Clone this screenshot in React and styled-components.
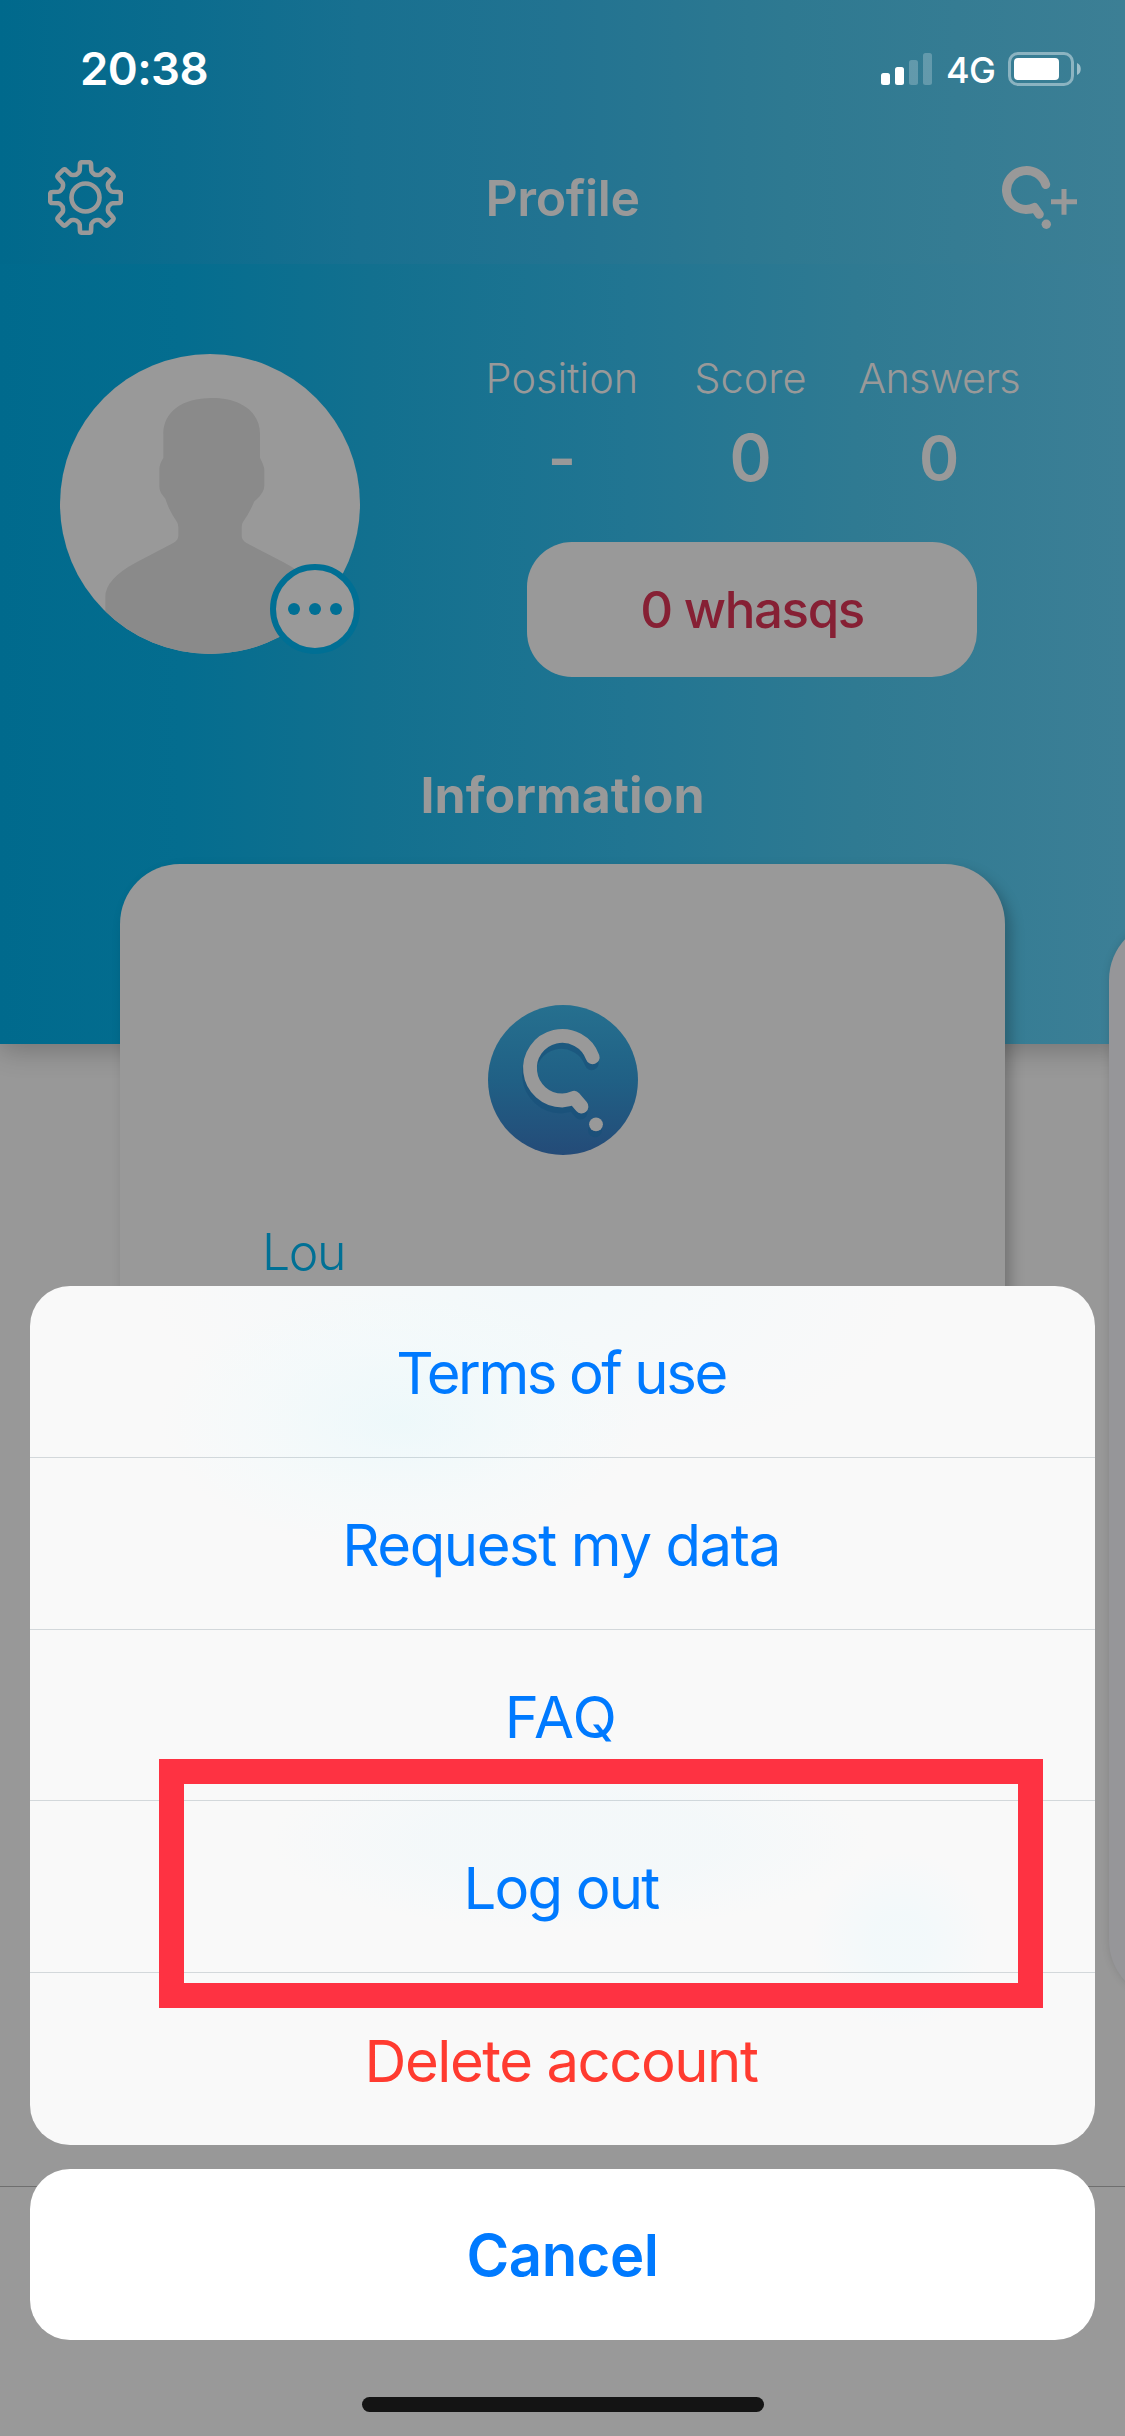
import React from "react";
import styled, { createGlobalStyle } from "styled-components";

const GlobalStyle = createGlobalStyle`
  body { margin: 0; background: #989898; }
  * { box-sizing: border-box; }
  button { font: inherit; border: 0; padding: 0; background: none; }
`;

const Screen = styled.div`
  position: relative;
  display: flex;
  flex-direction: column;
  width: 1125px;
  height: 2436px;
  overflow: hidden;
  background: #989898;
  color: #999;
  font-family: Inter, "Liberation Sans", sans-serif;
  white-space: nowrap;
`;

const Hero = styled.section`
  flex: none;
  height: 1044px;
  background: linear-gradient(90deg, #006a8d 0%, #046d8f 16%, #12708f 33%, #217592 56%, #2f7a92 76%, #3c7f96 100%);
  box-shadow: 0 6px 26px rgba(0, 0, 0, 0.24);
`;

const TopBar = styled.header`
  height: 264px;
  background: linear-gradient(90deg, #00698c 0%, #0b6c8e 16%, #187090 32%, #227391 50%, #2e7991 70%, #3c7f95 100%);
`;

const StatusBar = styled.div`
  display: flex;
  align-items: center;
  justify-content: space-between;
  height: 132px;
  padding: 5px 44px 0 80px;
  color: #fff;
`;

const Clock = styled.span`
  font-size: 45.5px;
  font-weight: 600;
  letter-spacing: -0.6px;
`;

const StatusIcons = styled.div`
  display: flex;
  align-items: center;
  gap: 14px;
`;

const Network = styled.span`
  width: 48px;
  font-size: 36px;
  font-weight: 500;
  letter-spacing: -0.6px;
  padding-top: 2px;
`;

const NavBar = styled.nav`
  display: grid;
  grid-template-columns: 75px 1fr 75px;
  align-items: center;
  height: 131px;
  padding: 0 48px;
`;

const NavTitle = styled.h1`
  margin: 0;
  text-align: center;
  font-size: 50px;
  font-weight: 600;
  letter-spacing: -0.4px;
`;

const Summary = styled.div`
  display: flex;
  height: 413px;
  padding: 90px 87px 0 60px;
`;

const Avatar = styled.div`
  position: relative;
  flex: none;
  width: 300px;
  height: 300px;
`;

const MoreBadge = styled.button`
  position: absolute;
  right: 0;
  bottom: 0;
  display: flex;
  align-items: center;
  justify-content: center;
  gap: 8.6px;
  width: 90px;
  height: 90px;
  border: 6px solid #006f94;
  border-radius: 50%;
  background: #999;
`;

const Dot = styled.i`
  width: 12.4px;
  height: 12.4px;
  border-radius: 50%;
  background: #006f94;
`;

const StatsPanel = styled.div`
  display: flex;
  flex-direction: column;
  align-items: center;
  flex: 1;
  margin-left: 106px;
`;

const Stats = styled.dl`
  display: grid;
  grid-template-columns: repeat(3, 188.6px);
  margin: -1px 3px 0 0;
  height: 189px;
`;

const Stat = styled.div`
  display: flex;
  flex-direction: column;
  align-items: center;
`;

const StatLabel = styled.dt`
  font-size: 41.5px;
  font-weight: 300;
  line-height: 50px;
  letter-spacing: ${(p) => p.$track || 0}px;
`;

const StatValue = styled.dd`
  margin: 15px 0 0;
  font-size: ${(p) => p.$size}px;
  font-weight: 600;
  line-height: 80px;
`;

const WhasqsButton = styled.button`
  width: 450px;
  height: 135px;
  border-radius: 45px;
  background: #999;
  color: #862034;
  font-size: 51px;
  font-weight: 500;
  letter-spacing: -1.4px;
`;

const SectionTitle = styled.h2`
  margin: 86px 0 0;
  text-align: center;
  font-size: 50px;
  line-height: 64px;
  font-weight: 700;
  letter-spacing: 0.05px;
`;

const Carousel = styled.div`
  display: flex;
  align-items: center;
  flex: none;
  gap: 104px;
  margin-top: -180px;
  padding-left: 120px;
  height: 1192px;
`;

const Card = styled.article`
  flex: none;
  display: flex;
  flex-direction: column;
  align-items: center;
  width: 885px;
  height: ${(p) => p.$height}px;
  padding-top: 141px;
  border-radius: 60px;
  background: ${(p) => (p.$dim ? "#969699" : "#999")};
  box-shadow: ${(p) => (p.$dim ? "0 0 8px rgba(0,0,0,.12)" : "6px 7px 14px rgba(0,0,0,.24)")};
`;

const OwnerName = styled.p`
  align-self: flex-start;
  margin: 66px 0 0 142px;
  color: #007095;
  font-size: 50px;
  font-weight: 300;
  line-height: 62px;
  letter-spacing: -1.4px;
`;

const TabBar = styled.footer`
  height: 250px;
  margin-top: auto;
  flex: none;
  border-top: 1.5px solid #6e6e6e;
  background: #999;
`;

const SheetLayer = styled.div`
  position: absolute;
  inset: 0;
  display: flex;
  flex-direction: column;
  justify-content: flex-end;
  gap: 24px;
  padding: 0 30px 24px;
`;

const ActionSheet = styled.div`
  position: relative;
`;

const Actions = styled.ul`
  display: grid;
  grid-template-rows: repeat(5, 171.8px);
  margin: 0;
  padding: 0;
  list-style: none;
  overflow: hidden;
  border-radius: 40px;
  background:
    radial-gradient(ellipse 240px 130px at 370px 135px, rgba(232, 248, 251, 0.65), rgba(240, 250, 252, 0.4) 60%, transparent),
    radial-gradient(ellipse 380px 180px at 500px 0, rgba(240, 249, 251, 0.7), transparent),
    radial-gradient(ellipse 300px 90px at 540px 555px, rgba(242, 248, 250, 0.7) 50%, transparent),
    radial-gradient(ellipse 90px 90px at 870px 655px, rgba(240, 249, 251, 0.7) 30%, transparent),
    #f9f9f9;
`;

const Action = styled.li`
  display: flex;
  align-items: center;
  justify-content: center;
  padding: 3px 3px 0 0;
  border-bottom: 1.5px solid rgba(60, 85, 100, 0.2);
  color: ${(p) => (p.$danger ? "#ff3b30" : "#007aff")};
  font-size: 58px;
  letter-spacing: ${(p) => p.$track || 0}px;
  &:last-child { border-bottom: 0; }
`;

const Highlight = styled.div`
  position: absolute;
  left: 129px;
  top: 473px;
  width: 884px;
  height: 249px;
  border: 25px solid #fe3242;
`;

const CancelButton = styled.button`
  height: 171px;
  border-radius: 40px;
  background: #fff;
  color: #007aff;
  font-size: 58px;
  font-weight: 600;
  letter-spacing: -0.5px;
`;

const HomeIndicator = styled.div`
  align-self: center;
  width: 402px;
  height: 15px;
  margin-top: 33px;
  border-radius: 8px;
  background: #141414;
`;

const SignalIcon = () => (
  <svg width="51" height="32" viewBox="0 0 51 32" fill="#fff">
    <rect x="0" y="20" width="9" height="12" rx="2.5" />
    <rect x="14" y="14" width="9" height="18" rx="2.5" />
    <rect x="28" y="7" width="9" height="25" rx="2.5" opacity=".23" />
    <rect x="42" y="0" width="9" height="32" rx="2.5" opacity=".23" />
  </svg>
);

const BatteryIcon = () => (
  <svg width="73" height="34" viewBox="0 0 73 34">
    <rect x="1.5" y="1.5" width="63" height="31" rx="8.5" fill="none" stroke="#fff" strokeOpacity=".42" strokeWidth="3" />
    <rect x="6" y="6" width="45" height="22" rx="4" fill="#fff" />
    <path d="M69 11c5 1.5 5 10.500 0 12z" fill="#fff" fillOpacity=".5" />
  </svg>
);

const gearPath = (() => {
  const at = (radius, degrees) => {
    const a = (degrees * Math.PI) / 180;
    return `${(37.5 + radius * Math.sin(a)).toFixed(2)} ${(37.5 - radius * Math.cos(a)).toFixed(2)}`;
  };
  let d = "";
  for (let i = 0; i < 8; i++) {
    const c = i * 45;
    d += `${i ? "L" : "M"}${at(25.6, c - 16.5)}Q${at(26.2, c - 13)} ${at(27.8, c - 12)}`;
    d += `L${at(33.6, c - 9.5)}Q${at(35.5, c - 9)} ${at(35.5, c - 5.5)}L${at(35.5, c + 5.5)}`;
    d += `Q${at(35.5, c + 9)} ${at(33.6, c + 9.5)}L${at(27.8, c + 12)}Q${at(26.2, c + 13)} ${at(25.6, c + 16.5)}`;
    d += `Q${at(24, c + 22.5)} ${at(25.6, c + 28.5)}`;
  }
  return `${d}Z`;
})();

const GearIcon = () => (
  <svg width="75" height="75" viewBox="0 0 75 75" fill="none" stroke="#999" strokeWidth="4.6" strokeLinejoin="round">
    <path d={gearPath} />
    <circle cx="37.5" cy="37.5" r="14" />
  </svg>
);

const AddQuestionIcon = () => (
  <svg width="75" height="75" viewBox="1002 160 75 75" fill="none" stroke="#999">
    <path d="M1045.700 184.500A20 19.500 0 1 0 1026 209.500Q1031 209.500 1034.500 207.500L1039.300 214.300" strokeWidth="9" strokeLinecap="round" strokeLinejoin="round" />
    <circle cx="1046.300" cy="224.300" r="4.700" fill="#999" stroke="none" />
    <path d="M1051 201.800h26M1064 189v25.700" strokeWidth="5" />
  </svg>
);

const Silhouette = () => (
  <svg width="300" height="300" viewBox="0 0 300 300">
    <defs>
      <clipPath id="avatar-round"><circle cx="150" cy="150" r="150" /></clipPath>
    </defs>
    <circle cx="150" cy="150" r="150" fill="#999" />
    <path
      clipPath="url(#avatar-round)"
      fill="#8a8a8a"
      d="M151.700 44C122 44 103.300 58 103.300 80V104Q99.300 110 99.300 116V132Q99.300 138 104 143Q106 145 106.500 148Q110 158 117 168Q118.300 170 118.300 173V182Q118.300 186 113.300 189L76 208.500Q45.300 225 45.300 243V300H254.700V243Q254.700 225 224 208.500L186.500 189Q181.700 186 181.700 182V173Q181.700 170 183 168Q190 158 194 148Q195 146.500 197 145Q204.300 138 204.300 132V116Q204.300 112 200 104V80C200 58 181 44 151.700 44Z"
    />
  </svg>
);

const BrandGlyph = ({ color }) => (
  <g stroke={color} fill="none">
    <path d="M104.700 77.300A32.300 32.300 0 1 0 74.300 120.500Q80 120.500 86 117.800L93.500 126.500" transform="translate(0 -25)" strokeWidth="13.800" strokeLinecap="round" strokeLinejoin="round" />
    <circle cx="108" cy="119.300" r="6.900" fill={color} stroke="none" />
  </g>
);

const BrandLogo = () => (
  <svg width="150" height="150" viewBox="0 0 150 150">
    <defs>
      <linearGradient id="brand" x1="0" y1="0" x2="0" y2="1">
        <stop offset="0" stopColor="#26708f" />
        <stop offset=".5" stopColor="#206085" />
        <stop offset="1" stopColor="#244b78" />
      </linearGradient>
    </defs>
    <circle cx="75" cy="75" r="75" fill="url(#brand)" />
    <g transform="translate(-1 6)" opacity=".6"><BrandGlyph color="#185079" /></g>
    <BrandGlyph color="#999" />
  </svg>
);

const stats = [
  { label: "Position", value: "-", size: 61 },
  { label: "Score", value: "0", size: 64 },
  { label: "Answers", value: "0", size: 61, track: -0.8 },
];

const actions = [
  { label: "Terms of use", track: -2.4 },
  { label: "Request my data", track: -1.4 },
  { label: "FAQ", track: 0.4 },
  { label: "Log out", track: -1.8 },
  { label: "Delete account", track: -1.45, danger: true },
];

export default function App() {
  return (
    <Screen>
      <GlobalStyle />
      <Hero>
        <TopBar>
          <StatusBar>
            <Clock>20:38</Clock>
            <StatusIcons>
              <SignalIcon />
              <Network>4G</Network>
              <BatteryIcon />
            </StatusIcons>
          </StatusBar>
          <NavBar>
            <GearIcon />
            <NavTitle>Profile</NavTitle>
            <AddQuestionIcon />
          </NavBar>
        </TopBar>
        <Summary>
          <Avatar>
            <Silhouette />
            <MoreBadge aria-label="More"><Dot /><Dot /><Dot /></MoreBadge>
          </Avatar>
          <StatsPanel>
            <Stats>
              {stats.map((s) => (
                <Stat key={s.label}>
                  <StatLabel $track={s.track}>{s.label}</StatLabel>
                  <StatValue $size={s.size}>{s.value}</StatValue>
                </Stat>
              ))}
            </Stats>
            <WhasqsButton>0 whasqs</WhasqsButton>
          </StatsPanel>
        </Summary>
        <SectionTitle>Information</SectionTitle>
      </Hero>
      <Carousel>
        <Card $height={1192}>
          <BrandLogo />
          <OwnerName>Lou</OwnerName>
        </Card>
        <Card $height={1080} $dim />
      </Carousel>
      <TabBar />
      <SheetLayer>
        <ActionSheet>
          <Actions>
            {actions.map((a) => (
              <Action key={a.label} $track={a.track} $danger={a.danger}>{a.label}</Action>
            ))}
          </Actions>
          <Highlight />
        </ActionSheet>
        <CancelButton>Cancel</CancelButton>
        <HomeIndicator />
      </SheetLayer>
    </Screen>
  );
}
